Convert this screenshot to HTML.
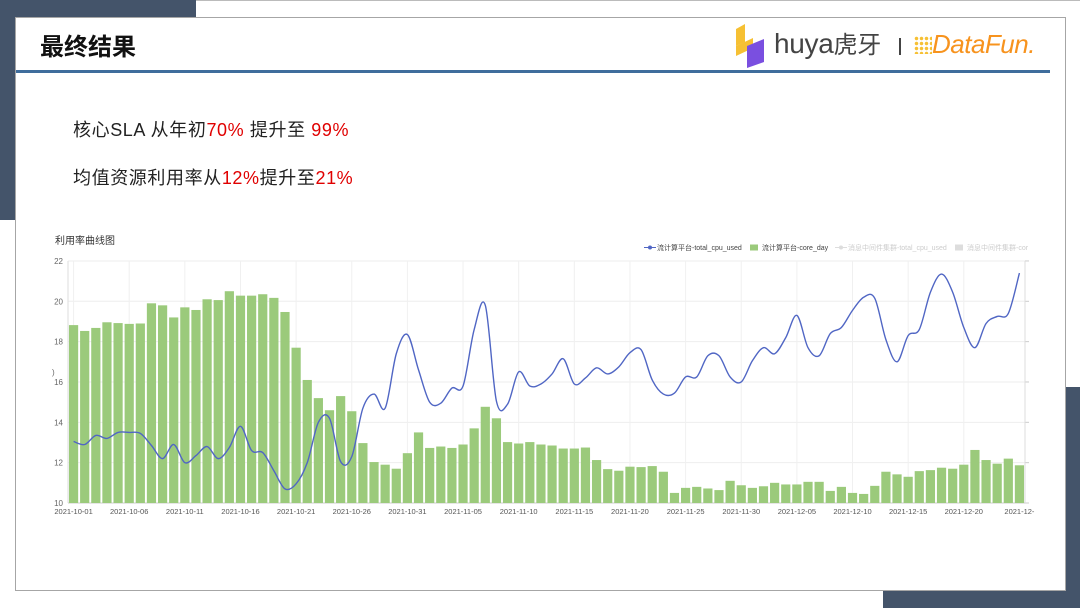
<!DOCTYPE html>
<html><head><meta charset="utf-8"><style>
body{margin:0;width:1080px;height:608px;position:relative;background:#fff;overflow:hidden;font-family:"Liberation Sans","Noto Sans CJK SC",sans-serif}
.d{position:absolute;background:#44546a}
.panel{position:absolute;left:15px;top:17px;width:1049px;height:572px;border:1px solid #a6a6a6;background:#fff}
.t{position:absolute;font-size:18px;color:#222;left:73px;letter-spacing:0.6px}
.r{color:#e00000}
</style></head><body>
<div style="position:absolute;left:196px;top:0;right:0;height:1px;background:#bbb"></div>
<div class="d" style="left:0;top:0;width:196px;height:17px"></div>
<div class="d" style="left:0;top:0;width:15px;height:220px"></div>
<div class="d" style="left:1066px;top:387px;width:14px;height:221px"></div>
<div class="d" style="left:883px;top:591px;width:197px;height:17px"></div>
<div class="panel"></div>
<div style="position:absolute;left:40px;top:29px;font-size:24px;font-weight:bold;color:#111;font-family:'Noto Sans CJK SC',sans-serif;line-height:32px">最终结果</div>
<div style="position:absolute;left:16px;top:70px;width:1034px;height:3px;background:#3f6d9c"></div>
<svg style="position:absolute;left:733px;top:22px" width="36" height="46" viewBox="0 0 36 46">
<polygon points="3,7 12,2 12,20 3,24" fill="#f6c033"/><polygon points="3,24 20,16 20,26 3,34" fill="#f6c033"/>
<polygon points="14,24 31,17 31,40 14,46" fill="#7a4fe0"/></svg>
<div style="position:absolute;left:774px;top:26px;font-size:28px;color:#444;line-height:34px;letter-spacing:-0.3px">huya<span style="font-family:'Noto Sans CJK SC',sans-serif;font-size:24px">虎牙</span></div>
<div style="position:absolute;left:899px;top:38px;width:2px;height:17px;background:#444"></div>
<div style="position:absolute;left:914px;top:36px;width:18px;height:18px;background:radial-gradient(circle,#f6c033 1.5px,transparent 2px) 0 0/5px 5px"></div>
<div style="position:absolute;left:932px;top:27px;font-size:26px;font-style:italic;color:#f7931e;line-height:34px;letter-spacing:-0.5px">DataFun.</div>
<div class="t" style="top:116px">核心SLA 从年初<span class="r">70%</span> 提升至 <span class="r">99%</span></div>
<div class="t" style="top:164px">均值资源利用率从<span class="r">12%</span>提升至<span class="r">21%</span></div>
<div style="position:absolute;left:55px;top:232px;font-size:10px;color:#333;font-family:'Noto Sans CJK SC',sans-serif">利用率曲线图</div>
<svg id="c" style="position:absolute;left:0;top:0" width="1080" height="608"></svg>
<script>
var bars=[18.82,18.53,18.68,18.96,18.92,18.88,18.9,19.9,19.8,19.2,19.7,19.57,20.1,20.06,20.5,20.28,20.28,20.35,20.17,19.47,17.7,16.1,15.2,14.6,15.3,14.55,12.97,12.03,11.9,11.7,12.47,13.5,12.73,12.8,12.73,12.9,13.7,14.77,14.2,13.02,12.95,13.02,12.9,12.85,12.7,12.7,12.75,12.13,11.68,11.6,11.8,11.78,11.83,11.55,10.5,10.75,10.8,10.72,10.64,11.1,10.88,10.75,10.83,11.0,10.92,10.92,11.05,11.05,10.6,10.8,10.5,10.45,10.85,11.55,11.42,11.3,11.58,11.63,11.75,11.7,11.9,12.63,12.13,11.95,12.2,11.87];
var line=[13.05,12.9,13.35,13.2,13.5,13.5,13.45,12.85,12.2,12.9,12.0,12.35,12.8,12.2,12.75,13.8,12.6,12.5,11.6,10.7,10.95,12.0,14.0,14.2,12.05,12.3,14.7,15.4,14.7,17.4,18.35,16.6,15.0,14.95,15.7,15.8,18.6,19.8,15.05,14.9,16.5,15.8,15.9,16.4,17.15,15.9,16.2,16.7,16.4,16.75,17.45,17.6,16.1,15.4,15.45,16.25,16.25,17.3,17.3,16.25,16.0,17.05,17.7,17.4,18.2,19.3,17.7,17.3,18.4,18.7,19.55,20.2,20.15,18.1,17.0,18.3,18.6,20.45,21.35,20.45,18.7,17.7,18.9,19.25,19.4,21.4];
var L=68,R=1025,bw=(R-L)/86,Y=function(v){return 503-(v-10)*20.17},X=function(i){return L+bw*(i+0.5)};
var s='';
for(var v=10;v<=22;v+=2){s+='<line x1="'+L+'" x2="'+R+'" y1="'+Y(v)+'" y2="'+Y(v)+'" stroke="#eee"/>';s+='<text x="63" y="'+(Y(v)+3)+'" font-size="8" fill="#666" text-anchor="end">'+v+'</text>';s+='<line x1="'+R+'" x2="'+(R+4)+'" y1="'+Y(v)+'" y2="'+Y(v)+'" stroke="#ccc"/>';}
var labs=['2021-10-01','2021-10-06','2021-10-11','2021-10-16','2021-10-21','2021-10-26','2021-10-31','2021-11-05','2021-11-10','2021-11-15','2021-11-20','2021-11-25','2021-11-30','2021-12-05','2021-12-10','2021-12-15','2021-12-20','2021-12-'];
for(var k=0;k<labs.length;k++){var x=X(k*5);if(k<17)s+='<line x1="'+x+'" x2="'+x+'" y1="261" y2="503" stroke="#f0f0f0"/>';s+='<text x="'+x+'" y="514" font-size="7.5" fill="#555" text-anchor="middle">'+labs[k]+'</text>';}
s+='<line x1="'+L+'" x2="'+L+'" y1="261" y2="503" stroke="#ddd"/><line x1="'+R+'" x2="'+R+'" y1="261" y2="503" stroke="#ddd"/><line x1="'+L+'" x2="'+R+'" y1="503" y2="503" stroke="#ccc"/>';
for(var i=0;i<bars.length;i++){var y=Y(bars[i]);s+='<rect x="'+(X(i)-4.6)+'" y="'+y+'" width="9.2" height="'+(503-y)+'" fill="#9bca7b"/>';}
var p=[];for(i=0;i<line.length;i++)p.push([X(i),Y(line[i])]);
var d='M'+p[0][0]+','+p[0][1];
for(i=0;i<p.length-1;i++){var a=p[Math.max(i-1,0)],b=p[i],c=p[i+1],e=p[Math.min(i+2,p.length-1)];
d+=' C'+(b[0]+(c[0]-a[0])/6)+','+(b[1]+(c[1]-a[1])/6)+' '+(c[0]-(e[0]-b[0])/6)+','+(c[1]-(e[1]-b[1])/6)+' '+c[0]+','+c[1];}
s+='<path d="'+d+'" fill="none" stroke="#5066c4" stroke-width="1.4"/>';
s+='<text x="52" y="375" font-size="8" fill="#666">)</text>';
s+='<line x1="644" x2="656" y1="247.5" y2="247.5" stroke="#5066c4"/><circle cx="650" cy="247.5" r="2" fill="#5066c4"/><text x="657" y="250" font-size="7" fill="#444">流计算平台-total_cpu_used</text>';
s+='<rect x="750" y="244.5" width="8" height="6" fill="#9bca7b"/><text x="762" y="250" font-size="7" fill="#444">流计算平台-core_day</text>';
s+='<line x1="835" x2="847" y1="247.5" y2="247.5" stroke="#ddd"/><circle cx="841" cy="247.5" r="2" fill="#ddd"/><text x="848" y="250" font-size="7" fill="#ccc">消息中间件集群-total_cpu_used</text>';
s+='<rect x="955" y="244.5" width="8" height="6" fill="#ddd"/><text x="967" y="250" font-size="7" fill="#ccc">消息中间件集群-cor</text>';
document.getElementById('c').innerHTML=s;
</script>
</body></html>
